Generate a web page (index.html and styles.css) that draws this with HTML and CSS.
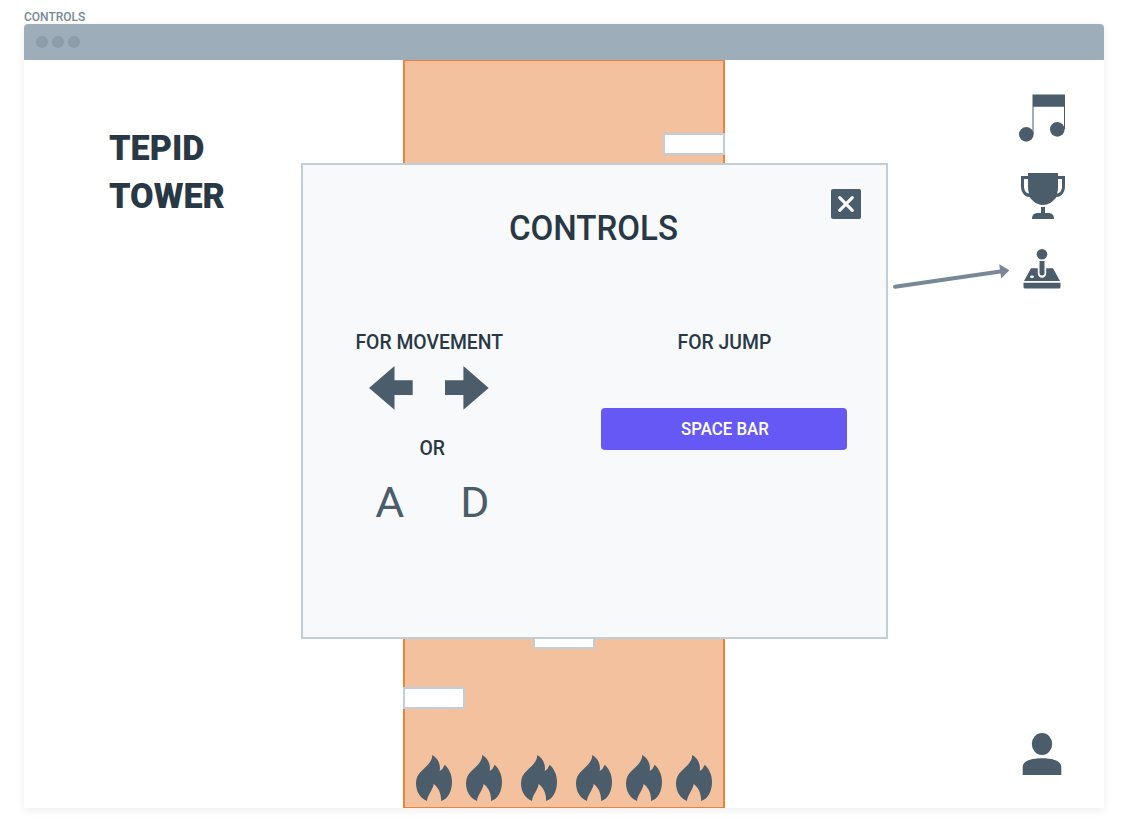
FILE: index.html
```html
<!DOCTYPE html>
<html lang="en">
<head>
<meta charset="utf-8">
<title>Tepid Tower - Controls</title>
<link rel="stylesheet" href="styles.css">
</head>
<body>
<svg class="defs" width="0" height="0" aria-hidden="true">
  <symbol id="flame" viewBox="0 0 108 138">
    <path d="M49 0C65 9 75 28 71 48C78 45 82 38 86 29C99 41 108 59 108 80C108 110 95 132 75 138C77 118 67 96 53 87C50 107 34 120 33 138C13 131 0 110 0 85C0 43 47 38 49 0Z"/>
  </symbol>
</svg>
<div class="frame-label"><span>CONTROLS</span></div>
<main class="window">
  <header class="titlebar"><i class="dot"></i><i class="dot"></i><i class="dot"></i></header>
  <div class="stage">
    <h1 class="game-title"><span>TEPID</span><br><span>TOWER</span></h1>
    <div class="tower">
      <div class="ledge ledge-top"></div>
      <div class="ledge ledge-mid"></div>
      <div class="ledge ledge-low"></div>
      <div class="flames">
        <svg class="flame"><use href="#flame"/></svg>
        <svg class="flame"><use href="#flame"/></svg>
        <svg class="flame flame-wide"><use href="#flame"/></svg>
        <svg class="flame flame-wide"><use href="#flame"/></svg>
        <svg class="flame"><use href="#flame"/></svg>
        <svg class="flame"><use href="#flame"/></svg>
      </div>
    </div>
    <nav class="side">
      <svg class="icon music" viewBox="0 0 46 48">
        <path d="M13.500 .6H46V35H45V12.800H14.500V40H13.500Z"/><circle cx="7.3" cy="40.400" r="7.3"/><circle cx="38.3" cy="35.400" r="7.3"/>
      </svg>
      <svg class="icon trophy" viewBox="0 0 44 46">
        <path d="M7 0H37V3H44V13C44 19 41 23.5 35.5 24C32 29 27 32 22 32C17 32 12 29 8.500 24C3 23.500 0 19 0 13V3H7ZM7 6H3V13C3 17 4.500 20 8 20.500C7 18 7 15 7 12ZM37 6V12C37 15 37 18 36 20.500C39.500 20 41 17 41 13V6Z"/>
        <path d="M20 34H24V40H27C31 40 33 42 33 46H11C11 42 13 40 17 40H20Z"/>
      </svg>
      <svg class="icon joystick" viewBox="0 0 38 40">
        <circle cx="19" cy="5.300" r="5.300"/>
        <path d="M16.500 12H21.500V24A2.500 2.500 0 0 1 16.500 24Z"/>
        <path fill-rule="evenodd" d="M8 19.300H14.800V24.500A4.200 4.200 0 0 0 23.200 24.500V19.300H30L37 32H1ZM7 27.800A2 1.300 0 1 0 11 27.800A2 1.300 0 1 0 7 27.800Z"/>
        <path d="M.5 33.700H37.500V38Q37.500 39.600 36 39.600H2Q.5 39.600 .5 38Z"/>
      </svg>
      <svg class="icon user" viewBox="0 0 40 42">
        <ellipse cx="20" cy="11" rx="10.200" ry="11"/>
        <path d="M.7 42V34C.7 28.500 8 25.300 20 25.300S39.300 28.500 39.300 34V42Z"/>
      </svg>
    </nav>
    <section class="modal">
      <button class="close" aria-label="Close">
        <svg width="30" height="30" viewBox="0 0 30 30"><path d="M8.700 8.700L21.300 21.300M21.300 8.700L8.700 21.300"/></svg>
      </button>
      <h2 class="modal-title"><span>CONTROLS</span></h2>
      <div class="columns">
        <div class="movement">
          <h3 class="caption"><span>FOR MOVEMENT</span></h3>
          <div class="arrows">
            <svg width="44" height="44" viewBox="0 0 44 44"><path d="M0 22L25.500 0V14.300H43.700V29H25.500V43.700Z"/></svg>
            <svg width="44" height="44" viewBox="0 0 44 44"><path d="M43.700 22L18.400 0V14.300H0V29H18.400V43.700Z"/></svg>
          </div>
          <p class="caption or"><span>OR</span></p>
          <div class="keys"><span>A</span><span>D</span></div>
        </div>
        <div class="jump">
          <h3 class="caption"><span>FOR JUMP</span></h3>
          <button class="space"><span>SPACE BAR</span></button>
        </div>
      </div>
    </section>
    <svg class="pointer" width="120" height="30" viewBox="0 0 120 30">
      <path class="shaft" d="M5 26.700L112 11.300"/><path class="head" d="M109.200 4.200L119.400 10.200L111.200 18.400Z"/>
    </svg>
  </div>
</main>
</body>
</html>
```
FILE: styles.css
```css
* { box-sizing: border-box; margin: 0; padding: 0; }
body { width: 1128px; height: 832px; overflow: hidden; background: #fff; padding: 0 24px; font-family: Roboto, "Liberation Sans", sans-serif; color: #293845; }
button { border: 0; font: inherit; }
svg { display: block; fill: #4b5c6b; flex: none; }
span { display: inline-block; white-space: nowrap; }
.defs { position: absolute; }
.frame-label { height: 24px; padding-top: 10px; font-size: 12px; line-height: 15px; font-weight: 500; color: #788896; }
.window { width: 1080px; height: 784px; border-radius: 4px 4px 0 0; background: #fff; box-shadow: 0 2px 10px rgba(0,0,0,.08); }
.titlebar { height: 36px; display: flex; align-items: center; gap: 4px; padding-left: 12px; background: #9eadba; border-radius: 4px 4px 0 0; }
.dot { width: 12px; height: 12px; border-radius: 50%; background: #8e9dac; }
.stage { position: relative; height: 748px; display: grid; grid-template-columns: 379px 322px 379px; }
.game-title { padding: 64px 0 0 85px; font-size: 35.5px; line-height: 48px; font-weight: 900; }
.game-title span { transform: scaleX(.963); transform-origin: 0 50%; }
.tower { position: relative; height: 748px; background: #f4c19e; border: solid #e98439; border-width: 1px 2px; display: flex; align-items: flex-end; }
.ledge { position: absolute; width: 62px; height: 22px; background: #fff; border: 2px solid #c1ceda; }
.ledge-top { right: -2px; top: 72px; }
.ledge-mid { left: 128px; top: 566px; }
.ledge-low { left: -2px; top: 626px; }
.flames { display: flex; gap: 14px; padding: 0 0 6px 11px; }
.flame { width: 36px; height: 46px; }
.flame-wide { margin-left: 5px; }
.side { display: flex; flex-direction: column; padding: 34px 0 33px 294px; }
.music { width: 46px; height: 48px; }
.trophy { width: 44px; height: 46px; margin: 31px 0 0 2px; }
.joystick { width: 38px; height: 40px; margin: 30px 0 0 4px; }
.user { width: 40px; height: 42px; margin: auto 0 0 3px; }
.modal { position: absolute; left: 277px; top: 103px; width: 587px; height: 476px; background: #f8f9fb; border: 2px solid #c1ceda; }
.close { position: absolute; right: 25px; top: 24px; width: 30px; height: 30px; border-radius: 2px; background: #4b5c6b; }
.close svg { fill: none; stroke: #f8f9fb; stroke-width: 3.2; stroke-linecap: round; }
.modal-title { padding: 41px 2px 0 0; text-align: center; font-size: 35px; line-height: 46px; font-weight: 500; }
.modal-title span { transform: scaleX(.945); }
.columns { display: grid; grid-template-columns: 252px 246px; gap: 46px; padding-top: 78px; }
.caption { text-align: center; font-size: 20px; line-height: 24px; font-weight: 500; }
.caption span { transform: scaleX(.968); }
.arrows { display: flex; gap: 32px; justify-content: center; padding-top: 12px; }
.or { padding-top: 26px; padding-left: 6px; }
.keys { display: flex; gap: 58px; padding: 18px 0 0 73px; font-size: 42px; line-height: 50px; color: #4b5c6b; }
.keys span { transform: scaleX(1.06); }
.space { display: block; width: 246px; height: 42px; margin-top: 54px; padding-left: 1px; background: #6558f5; border-radius: 4px; color: #fff; font-size: 18px; line-height: 42px; font-weight: 500; }
.space span { transform: scaleX(.935); }
.pointer { position: absolute; left: 866px; top: 200px; }
.shaft { fill: none; stroke: #788896; stroke-width: 4; stroke-linecap: round; }
.head { fill: #788896; }
```
